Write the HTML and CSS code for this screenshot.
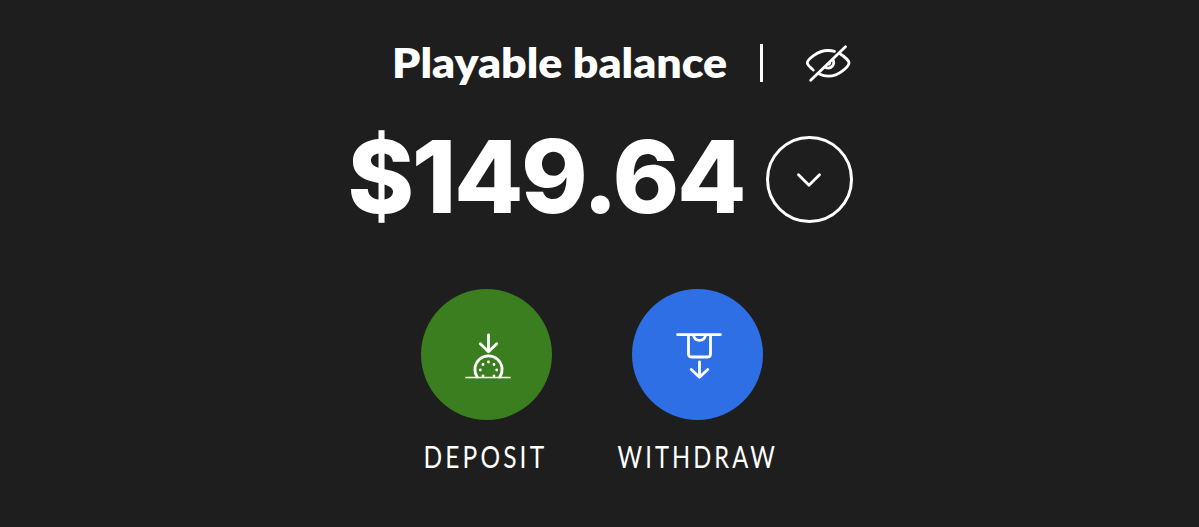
FILE: index.html
```html
<!DOCTYPE html>
<html lang="en">
<head>
  <meta charset="UTF-8">
  <meta name="viewport" content="width=device-width, initial-scale=1.0">
  <title>Playable balance</title>
  <link rel="stylesheet" href="styles.css">
</head>
<body>
  <main class="wallet">
    <div class="heading">
      <h2 class="title"><span>Playable balance</span></h2>
      <span class="divider"></span>
      <button class="hide-btn" aria-label="Hide balance">
        <svg width="46" height="40" viewBox="0 0 46 40">
          <path d="M8.3 27C4.5 23.8 2.3 21.5 2.3 20C2.3 17 12 7.5 23 7.5C25.5 7.5 27.5 7.8 29.5 8.4M35 10.8C40.5 14.2 44 18.4 44 20C44 22.8 34.5 33.2 23.5 33.2C20 33.2 17 32.4 13.8 30.8M28 16.6C30.5 21.5 26 26.8 20.5 24.4M24.8 20.2L23.8 21.3M40.5 3.8L5.7 37.3"/>
        </svg>
      </button>
    </div>

    <div class="balance">
      <div class="amount">$149.64</div>
      <button class="expand-btn" aria-label="Show details">
        <svg width="26" height="16" viewBox="0 0 26 16">
          <path d="M2.5 2.8L13 13.3L23.5 2.8"/>
        </svg>
      </button>
    </div>

    <div class="actions">
      <div class="action">
        <button class="action-btn deposit" aria-label="Deposit">
          <svg width="46" height="46" viewBox="0 0 46 46">
            <path class="thin" d="M1 44.5H45"/>
            <path d="M23.5 1.8V17M15.3 10.7L23.5 18.8L31.7 10.7"/>
            <path d="M12.2 44A13.6 13.6 0 1 1 34.8 44"/>
            <g class="dots">
              <circle cx="23.5" cy="29" r="1.4"/>
              <circle cx="18" cy="31.5" r="1.4"/>
              <circle cx="29" cy="31.5" r="1.4"/>
              <circle cx="15.3" cy="37" r="1.4"/>
              <circle cx="31.7" cy="37" r="1.4"/>
              <circle cx="18" cy="42.8" r="1.4"/>
              <circle cx="29" cy="42.8" r="1.4"/>
            </g>
          </svg>
        </button>
        <span class="label">DEPOSIT</span>
      </div>
      <div class="action">
        <button class="action-btn withdraw" aria-label="Withdraw">
          <svg width="46" height="46" viewBox="0 0 46 46">
            <path d="M1.5 1.6H44.5M12.5 2V21Q12.5 24 15.5 24H31.5Q34.5 24 34.5 21V2M17.5 2.5Q18.5 7.3 23.5 7.3Q28.5 7.3 29.5 2.5"/>
            <path d="M23.5 29V43.5M15.3 36.5L23.5 44.3L31.7 36.5"/>
          </svg>
        </button>
        <span class="label narrow">WITHDRAW</span>
      </div>
    </div>
  </main>
</body>
</html>
```
FILE: styles.css
```css
body { margin: 0; background: #1e1e1e; color: #fff; font-family: Lato, sans-serif; }
button { padding: 0; border: 0; background: none; color: inherit; display: flex; align-items: center; justify-content: center; }
svg { display: block; fill: none; stroke: #fff; stroke-width: 2.8; stroke-linecap: round; stroke-linejoin: round; }
.wallet { display: flex; flex-direction: column; align-items: center; padding-top: 43px; }

.heading { display: flex; align-items: center; height: 40px; width: 459px; padding-left: 44px; }
.title { margin: 0; width: 368px; font-size: 41px; font-weight: 800; line-height: 40px; white-space: nowrap; }
.title span { display: inline-block; transform: scaleX(1.09); transform-origin: left; }
.divider { width: 3px; height: 38px; background: #fff; }
.hide-btn { margin-left: 42px; }

.balance { display: flex; align-items: flex-start; height: 87px; width: 505px; margin-top: 53px; padding-left: 1px; }
.amount { width: 418px; font-family: Inter, sans-serif; font-size: 101px; font-weight: 800; line-height: 80px; letter-spacing: -2.4px; white-space: nowrap; }
.expand-btn { box-sizing: border-box; width: 87px; height: 87px; border: 3px solid #fff; border-radius: 50%; }

.actions { display: flex; gap: 80px; margin-top: 66px; padding-right: 15px; }
.action { display: flex; flex-direction: column; align-items: center; width: 131px; }
.action-btn { width: 131px; height: 131px; border-radius: 50%; }
.action-btn svg { margin: 2px 0 0 3px; }
.deposit { background: #3a7e20; }
.withdraw { background: #2e6fe5; }
.thin { stroke-width: 1.7; }
.dots { fill: #fff; stroke: none; }
.label { margin: 16px 2px 0 0; font-size: 31px; line-height: 40px; letter-spacing: 4px; transform: scaleX(.79); white-space: nowrap; }
.narrow { margin-right: 0; transform: scaleX(.765); }
```
